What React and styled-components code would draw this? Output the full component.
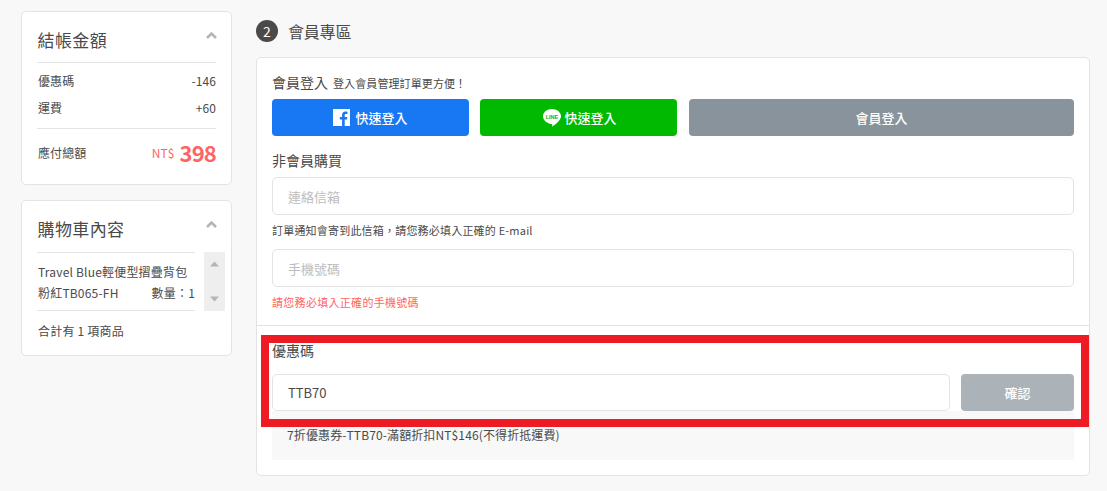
import React from 'react'
import styled, { createGlobalStyle } from 'styled-components'

const Global = createGlobalStyle`
  html, body { margin: 0; padding: 0; background: #f8f8f8; overflow: hidden; }
  body {
    font-family: "Noto Sans CJK TC", "Noto Sans", sans-serif;
    color: #4a4a4a;
  }
  * { box-sizing: border-box; }
`

const Page = styled.div`
  position: relative;
  width: 1107px;
  height: 491px;
  display: flex;
  align-items: flex-start;
  padding: 11px 17px 0 21px;
  gap: 24px;
`

const Side = styled.aside`
  width: 211px;
  display: flex;
  flex-direction: column;
  gap: 15px;
`

const Card = styled.section`
  position: relative;
  height: ${p => p.$h}px;
  background: #fff;
  border: 1px solid #e3e3e3;
  border-radius: 5px;
  padding: 16px ${p => p.$right || 15}px 0 15px;
`

const CardHead = styled.div`
  border-bottom: 1px solid #e3e3e3;
  height: ${p => p.$h || 35}px;
`

const CardTitle = styled.h3`
  margin: 0;
  font-size: 17px;
  font-weight: 400;
  line-height: 24px;
  letter-spacing: 0.4px;
  padding-left: 0.5px;
  color: #4a4a4a;
`

const Chevron = styled.svg`
  position: absolute;
  right: 14px;
  top: 19px;
  width: 11px;
  height: 8px;
`

const Row = styled.div`
  display: flex;
  justify-content: space-between;
  align-items: center;
  height: 27px;
  padding-left: 1px;
  font-size: 12px;
  letter-spacing: 0.1px;
  color: #4a4a4a;
`

const Rows = styled.div`
  padding: 4px 0 7px;
  border-bottom: 1px solid #e3e3e3;
`

const TotalRow = styled.div`
  display: flex;
  justify-content: space-between;
  align-items: center;
  height: 46px;
  padding-left: 1px;
  font-size: 12px;
  letter-spacing: 0.1px;
`

const Price = styled.div`
  color: #ff6464;
  display: flex;
  align-items: center;
  gap: 5px;
  font-size: 12px;
  b {
    font-size: 22px;
    font-weight: 700;
    letter-spacing: -0.8px;
    line-height: 1;
  }
`

const CartBody = styled.div`
  display: flex;
  position: relative;
`

const CartItem = styled.div`
  width: 158px;
  height: 58px;
  border-bottom: 1px solid #e3e3e3;
  font-size: 12px;
  line-height: 21px;
  padding: 8px 0 0 1px;
  letter-spacing: 0.2px;
`

const ItemLine = styled.div`
  display: flex;
  justify-content: space-between;
  white-space: nowrap;
`

const ScrollBar = styled.div`
  position: absolute;
  left: 167px;
  top: -1px;
  width: 21px;
  height: 59px;
  background: #eeeeee;
  display: flex;
  flex-direction: column;
  justify-content: space-between;
  align-items: center;
  padding: 9px 0;
`

const CartFoot = styled.div`
  font-size: 12px;
  line-height: 20px;
  letter-spacing: 0.2px;
  padding: 10px 0 0 1px;
`

const Main = styled.main`
  flex: 1;
`

const StepHead = styled.div`
  display: flex;
  align-items: center;
  gap: 10px;
  height: 46px;
  padding-bottom: 6px;
`

const StepNum = styled.span`
  width: 22px;
  height: 22px;
  border-radius: 50%;
  background: #4a4a4a;
  color: #fff;
  font-size: 14px;
  display: flex;
  align-items: center;
  justify-content: center;
`

const StepTitle = styled.h2`
  margin: 0;
  font-size: 16px;
  font-weight: 400;
  letter-spacing: -0.2px;
`

const Panel = styled.div`
  background: #fff;
  border: 1px solid #e3e3e3;
  border-radius: 5px;
  height: 419px;
`

const Upper = styled.div`
  height: 268px;
  padding: 14px 15px 0;
  border-bottom: 1px solid #e3e3e3;
`

const Lower = styled.div`
  padding: 14px 15px 0;
`

const LoginTitle = styled.div`
  font-size: 14px;
  line-height: 20px;
  height: 27px;
  small {
    font-size: 11px;
    margin-left: 5px;
    letter-spacing: 0.1px;
  }
`

const Socials = styled.div`
  display: grid;
  grid-template-columns: 197px 197px 1fr;
  column-gap: 11px;
  button:last-child { margin-left: 1px; }
`

const SocialBtn = styled.button`
  height: 37px;
  border: 0;
  border-radius: 4px;
  background: ${p => p.$bg};
  color: #fff;
  font: 500 13px "Noto Sans CJK TC", sans-serif;
  display: flex;
  align-items: center;
  justify-content: center;
  gap: ${p => p.$gap || 5}px;
  padding: 0 0 0 ${p => p.$pad || 0}px;
`

const Label = styled.div`
  font-size: 14px;
  line-height: 20px;
  margin: ${p => p.$mt || 0}px 0 ${p => p.$mb || 0}px;
`

const Field = styled.input`
  display: block;
  width: 100%;
  height: ${p => p.$h || 38}px;
  border: 1px solid #e3e3e3;
  border-radius: 5px;
  background: #fff;
  padding: 0 15px;
  font: 400 13px "Noto Sans CJK TC", sans-serif;
  color: #4a4a4a;
  outline: none;
  &::placeholder { color: #bdbdbd; opacity: 1; }
`

const Note = styled.div`
  font-size: 11px;
  line-height: 16px;
  letter-spacing: ${p => p.$red ? 0.3 : 0.2}px;
  margin: ${p => p.$mt}px 0 ${p => p.$mb || 0}px;
  color: ${p => p.$red ? '#ff6464' : '#4a4a4a'};
`

const CouponRow = styled.div`
  display: flex;
  gap: 11px;
`

const ConfirmBtn = styled.button`
  flex: 0 0 113px;
  height: 37px;
  border: 0;
  border-radius: 4px;
  background: #abb3b9;
  color: #fff;
  font: 500 13px "Noto Sans CJK TC", sans-serif;
`

const CouponInfo = styled.div`
  height: 49px;
  background: #f8f8f8;
  font-size: 12px;
  line-height: 20px;
  letter-spacing: 0.12px;
  padding: 14px 15px 0;
`

// annotation frame painted over the screenshot
const Highlight = styled.div`
  position: absolute;
  left: 261px;
  top: 335px;
  width: 828px;
  height: 92px;
  border: 8px solid #ed1c24;
  pointer-events: none;
`

const Caret = ({ up }) => (
  <svg width="9" height="6" viewBox="0 0 9 6">
    <path d={up ? 'M4.5 0.5L9 5.500H0z' : 'M4.5 5.500L0 0.500h9z'} fill="#b5b5b5" />
  </svg>
)

const Collapse = () => (
  <Chevron viewBox="0 0 11 8">
    <path d="M1 7L5.500 2.500L10 7" fill="none" stroke="#b5b5b5" strokeWidth="2.6" />
  </Chevron>
)

const FacebookIcon = () => (
  <svg width="17" height="17" viewBox="0 0 17 17">
    <rect width="17" height="17" fill="#fff" />
    <path d="M11.700 17v-6.500h2.200l.4-2.600h-2.600V6.300c0-.8.2-1.200 1.300-1.200h1.400V2.700c-.3 0-1.100-.1-2-.1-2 0-3.300 1.200-3.300 3.400v1.900H6.800v2.600h2.300V17z" fill="#1877f2" />
  </svg>
)

const LineIcon = () => (
  <svg width="18" height="18" viewBox="0 0 18 18">
    <path d="M9 0c5 0 9 3.200 9 7.300 0 3.500-4.600 7.600-8.300 10-.8.4-.6-.6-.5-1.200.1-.6 0-1-.7-1.100C3.800 14.500 0 11.300 0 7.300 0 3.200 4 0 9 0z" fill="#fff" />
    <text x="9" y="9.500" textAnchor="middle" fontSize="5.500" fontWeight="700" fontFamily="Liberation Sans, sans-serif" fill="#00b900">LINE</text>
  </svg>
)

const App = () => (
  <>
    <Global />
    <Page>
      <Side>
        <Card $h={174}>
          <CardHead>
            <CardTitle>結帳金額</CardTitle>
          </CardHead>
          <Collapse />
          <Rows>
            <Row><span>優惠碼</span><span>-146</span></Row>
            <Row><span>運費</span><span>+60</span></Row>
          </Rows>
          <TotalRow>
            <span>應付總額</span>
            <Price>NT$ <b>398</b></Price>
          </TotalRow>
        </Card>
        <Card $h={156} $right={36}>
          <CardHead $h={36}>
            <CardTitle>購物車內容</CardTitle>
          </CardHead>
          <Collapse />
          <CartBody>
            <CartItem>
              <ItemLine>Travel Blue輕便型摺疊背包</ItemLine>
              <ItemLine><span>粉紅TB065-FH</span><span>數量：1</span></ItemLine>
            </CartItem>
            <ScrollBar>
              <Caret up />
              <Caret />
            </ScrollBar>
          </CartBody>
          <CartFoot>合計有 1 項商品</CartFoot>
        </Card>
      </Side>
      <Main>
        <StepHead>
          <StepNum>2</StepNum>
          <StepTitle>會員專區</StepTitle>
        </StepHead>
        <Panel>
          <Upper>
            <LoginTitle>會員登入<small>登入會員管理訂單更方便！</small></LoginTitle>
            <Socials>
              <SocialBtn $bg="#1877f2"><FacebookIcon />快速登入</SocialBtn>
              <SocialBtn $bg="#00b900" $gap={3} $pad={3}><LineIcon />快速登入</SocialBtn>
              <SocialBtn $bg="#89939b">會員登入</SocialBtn>
            </Socials>
            <Label $mt={14} $mb={7}>非會員購買</Label>
            <Field placeholder="連絡信箱" readOnly />
            <Note $mt={7} $mb={11}>訂單通知會寄到此信箱，請您務必填入正確的 E-mail</Note>
            <Field placeholder="手機號碼" readOnly />
            <Note $mt={7} $red>請您務必填入正確的手機號碼</Note>
          </Upper>
          <Lower>
            <Label $mb={14}>優惠碼</Label>
            <CouponRow>
              <Field value="TTB70" $h={37} readOnly />
              <ConfirmBtn>確認</ConfirmBtn>
            </CouponRow>
            <CouponInfo>7折優惠券-TTB70-滿額折扣NT$146(不得折抵運費)</CouponInfo>
          </Lower>
        </Panel>
      </Main>
      <Highlight />
    </Page>
  </>
)

export default App
